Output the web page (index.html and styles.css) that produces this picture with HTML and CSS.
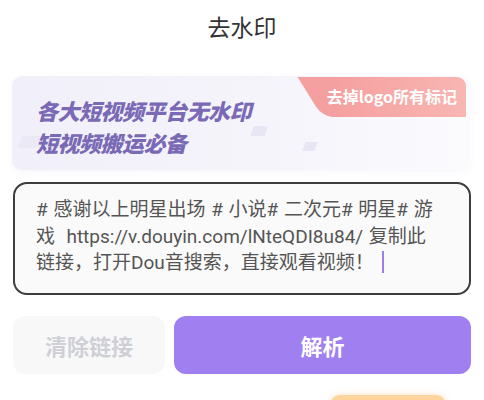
FILE: index.html
```html
<!DOCTYPE html>
<html lang="zh-CN">
  <head>
    <meta charset="utf-8" />
    <meta name="viewport" content="width=device-width, initial-scale=1" />
    <title>去水印</title>
    <link rel="stylesheet" href="styles.css">
  </head>
  <body>
    <header class="top-bar">去水印</header>

    <div class="page">
      <!-- banner with slogan and badge -->
      <section class="banner">
        <span class="banner-deco deco-1"></span>
        <span class="banner-deco deco-2"></span>
        <span class="banner-deco deco-3"></span>
        <p class="banner-title">各大短视频平台无水印<br>短视频搬运必备</p>
        <div class="badge">去掉logo所有标记</div>
      </section>

      <div class="link-box">
        <p class="link-text"># 感谢以上明星出场 # 小说# 二次元# 明星# 游<br>戏&nbsp; https://v.douyin.com/lNteQDI8u84/ 复制此<br>链接，打开Dou音搜索，直接观看视频！<span class="caret"></span></p>
      </div>

      <div class="actions">
        <button class="btn btn-clear">清除链接</button>
        <button class="btn btn-parse">解析</button>
      </div>

      <div class="next-row">
        <span class="next-btn"></span>
      </div>
    </div>
  </body>
</html>
```

FILE: styles.css
```css
body {
  margin: 0;
  background: #fff;
  font-family: "Noto Sans CJK SC", "Noto Sans", sans-serif;
  overflow: hidden;
}

.top-bar {
  height: 52px;
  line-height: 52px;
  text-align: center;
  font-size: 23px;
  color: #333;
}

.page {
  padding: 24px 13px 0 13px;
}

/* banner */
.banner {
  position: relative;
  height: 94px;
  margin: 0 1px 0 -1px;
  border-radius: 10px;
  background: linear-gradient(90deg, #f1eff9 0%, #f5f4fb 55%, #fbfbfe 100%);
  box-shadow: 0 2px 6px rgba(120, 110, 170, 0.06);
  overflow: hidden;
}

.banner-deco {
  position: absolute;
  background: rgba(220, 216, 238, 0.55);
  transform: skewX(-20deg);
}

.deco-1 { left: 240px; top: 50px; width: 14px; height: 10px; }
.deco-2 { left: 292px; top: 66px; width: 12px; height: 9px; }
.deco-3 { left: 8px; top: 60px; width: 40px; height: 12px; background: rgba(230, 228, 244, 0.6); }

.banner-title {
  position: relative;
  margin: 0;
  padding: 18px 0 0 24px;
  font-size: 22px;
  line-height: 32px;
  font-weight: 900;
  font-style: italic;
  color: #7a69b5;
  letter-spacing: -0.5px;
}

.badge {
  position: absolute;
  z-index: 1;
  top: 1px;
  right: 4px;
  height: 40px;
  width: 152px;
  line-height: 38px;
  text-align: right;
  padding-right: 9px;
  box-sizing: border-box;
  font-size: 16px;
  font-weight: 700;
  color: #fff;
}

.badge::before {
  content: "";
  position: absolute;
  left: -4px;
  top: 0;
  width: 40px;
  height: 40px;
  background: #f5a0a0;
  transform: skewX(32deg);
  border-radius: 0 0 0 10px;
  z-index: -1;
}

.badge::after {
  content: "";
  position: absolute;
  left: 20px;
  right: 0;
  top: 0;
  bottom: 0;
  background: linear-gradient(90deg, #f5a0a0, #f8b6b2);
  border-radius: 0 9px 0 0;
  z-index: -1;
}

/* link input */
.link-box {
  margin-top: 12px;
  height: 113px;
  box-sizing: border-box;
  border: 2px solid #3d3d3d;
  border-radius: 14px;
  background: #fafafa;
  padding: 13px 10px 0 21px;
}

.link-text {
  margin: 0;
  font-family: Roboto, "Noto Sans CJK SC", sans-serif;
  font-size: 19px;
  line-height: 26.5px;
  word-spacing: 1px;
  color: #555;
  white-space: nowrap;
}

.caret {
  display: inline-block;
  width: 2px;
  height: 22px;
  margin-left: 8px;
  vertical-align: -4px;
  background: #9a80e6;
}

/* buttons */
.actions {
  display: flex;
  gap: 9px;
  margin-top: 21px;
}

.btn {
  height: 58px;
  border: 0;
  border-radius: 12px;
  font-family: inherit;
  font-size: 22px;
  font-weight: 700;
  cursor: pointer;
}

.btn-clear {
  width: 152px;
  background: #f8f8f9;
  color: #cfd0d6;
}

.btn-parse {
  flex: 1;
  background: #a07ff0;
  color: #fff;
}

.next-row {
  display: flex;
  justify-content: flex-end;
  padding: 21px 25px 0 0;
}

.next-btn {
  width: 116px;
  height: 20px;
  border-radius: 10px 10px 0 0;
  background: #fcd49c;
  box-shadow: 0 0 6px rgba(252, 200, 140, 0.5);
}
```
